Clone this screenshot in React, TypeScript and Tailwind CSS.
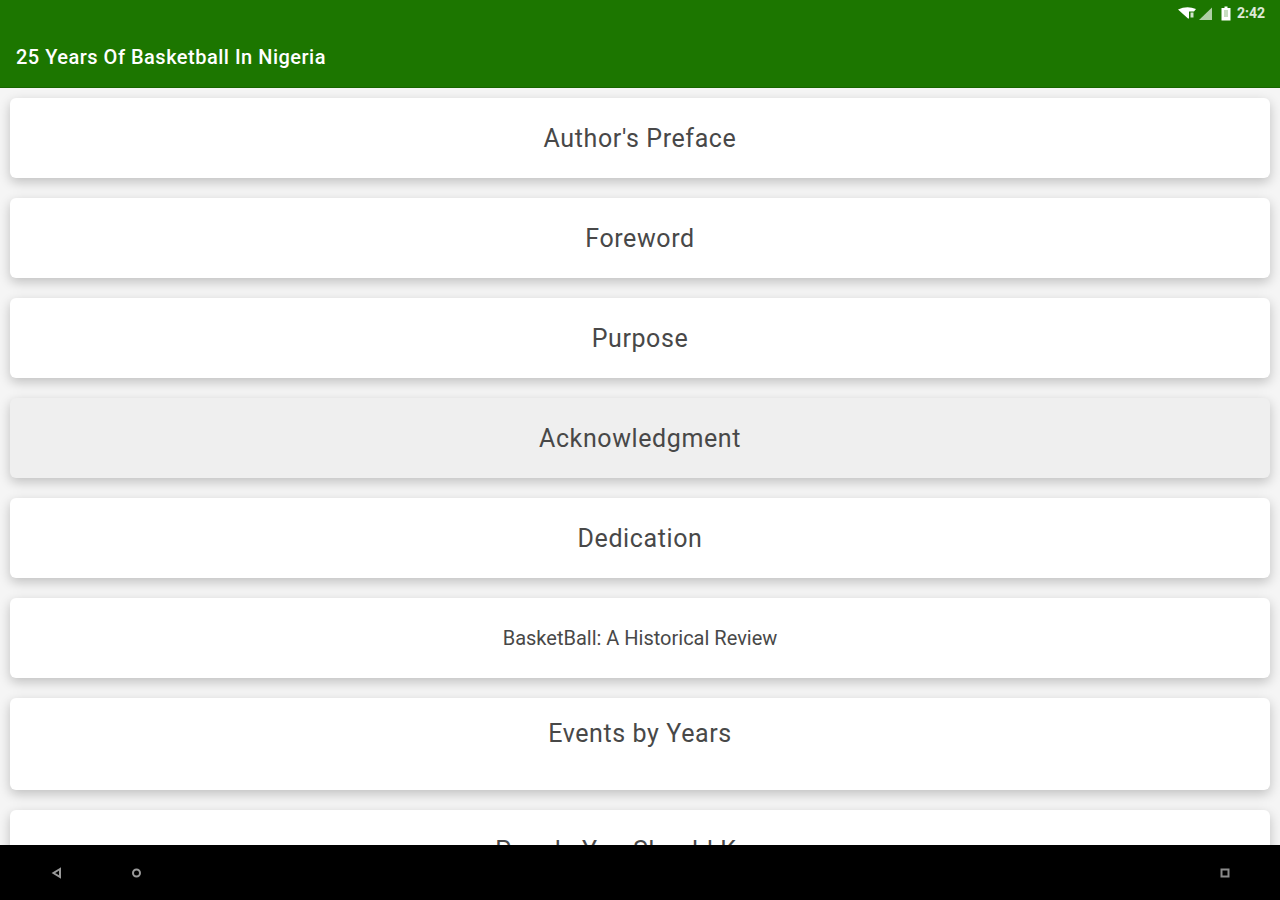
const items = [
  { title: "Author's Preface", text: 'items-center text-[25px] tracking-[0.6px] pt-0.5', height: 'h-20' },
  { title: 'Foreword', text: 'items-center text-[25px] tracking-[0.6px] pt-0.5', height: 'h-20' },
  { title: 'Purpose', text: 'items-center text-[25px] tracking-[0.6px] pt-0.5', height: 'h-20' },
  { title: 'Acknowledgment', text: 'items-center text-[25px] tracking-[0.6px] pt-0.5', height: 'h-20', pressed: true },
  { title: 'Dedication', text: 'items-center text-[25px] tracking-[0.6px] pt-0.5', height: 'h-20' },
  { title: 'BasketBall: A Historical Review', text: 'items-center text-xl', height: 'h-20' },
  { title: 'Events by Years', text: 'items-start text-[25px] tracking-[0.6px]', height: 'h-[92px] pt-[17px]' },
  { title: 'People You Should Know', text: 'items-start text-[25px] tracking-[0.6px]', height: 'h-[92px] pt-[22px]' },
];

function StatusIcons() {
  return (
    <div className="flex items-center justify-end h-[26px] pr-[15px]">
      <svg width="18" height="12" viewBox="0 0 18 12" fill="#fff">
        <path d="M0 2.5 Q9 -1.5 18 2 L16 4.5 H11 V11.5 H10 Z" />
        <rect x="12.5" y="5.5" width="3" height="5" opacity="0.8" />
      </svg>
      <svg width="15" height="13" viewBox="0 0 15 13" fill="#fff" className="ml-[2px]">
        <path d="M14 0.5 V13 H1 Z" opacity="0.65" />
      </svg>
      <svg width="10" height="15" viewBox="0 0 10 15" fill="#fff" className="ml-2">
        <path d="M3.5 0.5 H6.5 V2 H9.5 V14.5 H0.5 V2 H3.5 Z" />
        <rect x="3" y="4" width="4" height="7" fill="#c8dcc0" />
      </svg>
      <span className="ml-1.5 text-sm leading-none font-bold text-white/85">2:42</span>
    </div>
  );
}

function NavIcons() {
  return (
    <div className="h-[55px] shrink-0 bg-black flex items-center pl-[51px] pr-[50px]">
      <svg width="11" height="12" viewBox="0 0 11 12" fill="none" stroke="#9a9a9a" strokeWidth="2">
        <path d="M9 2 L2.5 6 L9 10 Z" />
      </svg>
      <svg width="11" height="12" viewBox="0 0 11 12" fill="none" stroke="#9a9a9a" strokeWidth="2" className="ml-[69px]">
        <circle cx="5.5" cy="6" r="3.5" />
      </svg>
      <svg width="10" height="10" viewBox="0 0 10 10" fill="none" stroke="#8a8a8a" strokeWidth="2" className="ml-auto">
        <rect x="1.5" y="1.5" width="7" height="7" />
      </svg>
    </div>
  );
}

export default function App() {
  return (
    <div className="h-[900px] flex flex-col overflow-hidden bg-[#f5f5f5] font-['Roboto',sans-serif]">
      <header className="h-[88px] shrink-0 bg-[#1c7600] z-10 border-b border-[#186400]">
        <StatusIcons />
        <h1 className="pl-4 pt-[13px] text-xl leading-9 font-medium tracking-[0.5px] text-white">
          25 Years Of Basketball In Nigeria
        </h1>
      </header>

      <div className="flex-1 min-h-0 overflow-hidden px-[10px] pt-[10px] flex flex-col gap-5">
        {items.map((item) => (
          <div
            key={item.title}
            className={`shrink-0 flex justify-center rounded-[6px] shadow-[0_4px_12px_rgba(0,0,0,0.22)] text-[#484848] ${
              item.pressed ? 'bg-[#efefef]' : 'bg-white'
            } ${item.height} ${item.text}`}
          >
            {item.title}
          </div>
        ))}
      </div>

      <NavIcons />
    </div>
  );
}
